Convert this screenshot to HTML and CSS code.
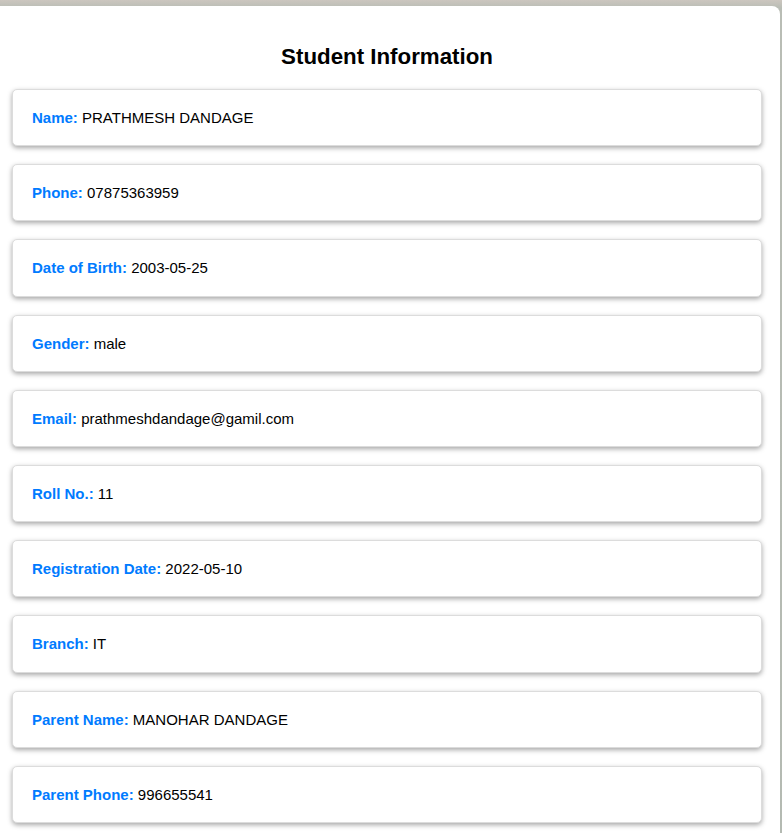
FILE: index.html
```html
<!DOCTYPE html>
<html lang="en">
<head>
<meta charset="utf-8">
<title>Student Information</title>
<link rel="stylesheet" href="styles.css">
</head>
<body>
<div class="container">
  <h2 class="title">Student Information</h2>
  <div class="card"><span class="label">Name:</span> PRATHMESH DANDAGE</div>
  <div class="card"><span class="label">Phone:</span> 07875363959</div>
  <div class="card"><span class="label">Date of Birth:</span> 2003-05-25</div>
  <div class="card"><span class="label">Gender:</span> male</div>
  <div class="card"><span class="label">Email:</span> prathmeshdandage@gamil.com</div>
  <div class="card"><span class="label">Roll No.:</span> 11</div>
  <div class="card"><span class="label">Registration Date:</span> 2022-05-10</div>
  <div class="card"><span class="label">Branch:</span> IT</div>
  <div class="card"><span class="label">Parent Name:</span> MANOHAR DANDAGE</div>
  <div class="card"><span class="label">Parent Phone:</span> 996655541</div>
</div>
</body>
</html>
```
FILE: styles.css
```css
html, body {
  margin: 0;
  padding: 0;
}
body {
  background: linear-gradient(180deg, #ccc6bf 0, #b9bdb5 8px, #b4bab2 100%);
  font-family: "Liberation Sans", Arial, sans-serif;
  color: #000;
  overflow: hidden;
}
.container {
  background: #fff;
  margin-top: 6px;
  width: 780px;
  box-sizing: border-box;
  padding: 20px 18px 20px 12px;
  border-top-right-radius: 8px;
  min-height: 840px;
}
.title {
  font-size: 22.3px;
  line-height: 25px;
  font-weight: bold;
  text-align: center;
  margin: 18px 0 20px;
}
.card {
  border: 1px solid #dcdcdc;
  border-radius: 5px;
  box-shadow: 0 2px 5px rgba(0, 0, 0, 0.35);
  padding: 19px 19px;
  font-size: 15px;
  line-height: 17.2px;
  margin-bottom: 18px;
  background: #fff;
}
.label {
  color: #007bff;
  font-weight: bold;
}
```
